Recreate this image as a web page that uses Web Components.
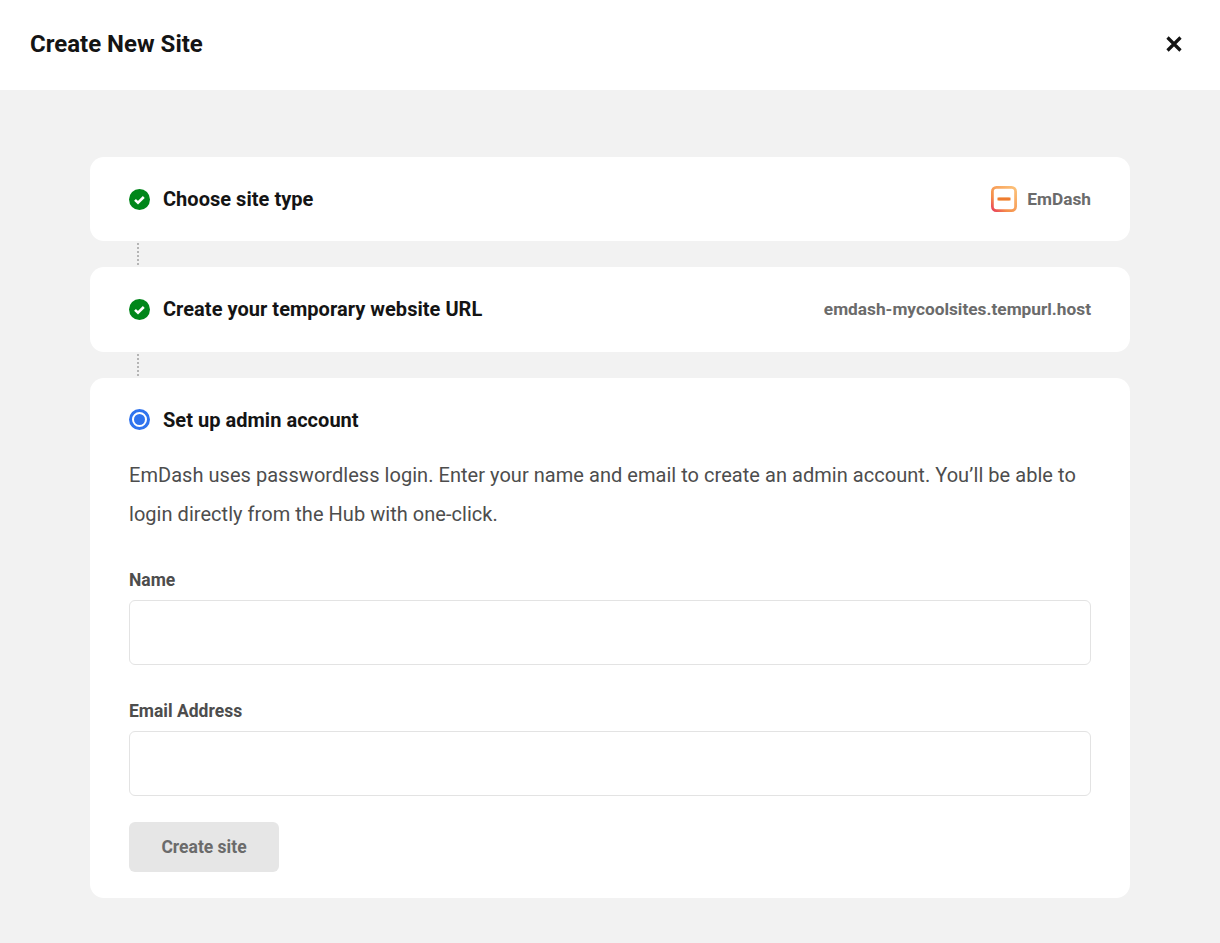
<!DOCTYPE html>
<html lang="en">
<head>
<meta charset="utf-8">
<title>Create New Site</title>
<style>
  html, body { margin: 0; background: #f2f2f2; font-family: Roboto, "Liberation Sans", sans-serif; }
</style>
</head>
<body>
<create-site-app></create-site-app>

<script>
class ModalHeader extends HTMLElement {
  constructor() {
    super();
    this.attachShadow({ mode: "open" });
  }

  connectedCallback() {
    this.shadowRoot.innerHTML = `
      <style>
        :host {
          display: flex;
          align-items: center;
          justify-content: space-between;
          height: 90px;
          padding: 0 36px 3px 30px;
          box-sizing: border-box;
          background: #fff;
        }
        h1 { margin: 0; font-size: 24px; font-weight: 700; color: #141414; }
        svg { display: block; }
      </style>
      <h1><slot></slot></h1>
      <svg width="20" height="20" viewBox="0 0 20 20" fill="none" stroke="#141414" stroke-width="3.2">
        <path d="M3.5 3.5 L16.5 16.5 M16.5 3.5 L3.5 16.5"/>
      </svg>
    `;
  }
}

class StepCard extends HTMLElement {
  constructor() {
    super();
    this.attachShadow({ mode: "open" });
  }

  connectedCallback() {
    const done = this.getAttribute("state") === "done";
    const icon = done
      ? `<svg width="21" height="21" viewBox="0 0 21 21">
           <circle cx="10.5" cy="10.5" r="10.5" fill="#00861a"/>
           <path d="M6 10.9 L9 13.7 L14.8 8" fill="none" stroke="#fff" stroke-width="2.6"/>
         </svg>`
      : `<svg width="21" height="21" viewBox="0 0 21 21">
           <circle cx="10.5" cy="10.5" r="9" fill="none" stroke="#2f73ee" stroke-width="3"/>
           <circle cx="10.5" cy="10.5" r="5.5" fill="#2f73ee"/>
         </svg>`;
    this.shadowRoot.innerHTML = `
      <style>
        :host {
          display: block;
          background: #fff;
          border-radius: 14px;
          padding: 31px 39px;
        }
        .head {
          display: flex;
          align-items: center;
          gap: 13px;
          height: 22.3px;
        }
        svg { display: block; flex: none; }
        .title {
          font-size: 20px;
          font-weight: 700;
          letter-spacing: 0.03px;
          color: #141414;
          flex: 1;
        }
      </style>
      <div class="head">
        ${icon}
        <span class="title">${this.getAttribute("title")}</span>
        <slot name="aside"></slot>
      </div>
      <slot></slot>
    `;
  }
}

class StepConnector extends HTMLElement {
  constructor() {
    super();
    this.attachShadow({ mode: "open" });
  }

  connectedCallback() {
    this.shadowRoot.innerHTML = `
      <style>
        :host {
          display: block;
          box-sizing: border-box;
          height: 26px;
          padding: 2px 0 0 47px;
        }
        div {
          width: 0;
          height: 22px;
          border-left: 2px dotted #b5b5b5;
        }
      </style>
      <div></div>
    `;
  }
}

class FormField extends HTMLElement {
  constructor() {
    super();
    this.attachShadow({ mode: "open" });
  }

  connectedCallback() {
    this.shadowRoot.innerHTML = `
      <style>
        :host { display: block; }
        label {
          display: block;
          font-size: 17.5px;
          line-height: 19px;
          font-weight: 700;
          color: #4d4d4d;
          margin-bottom: 10px;
        }
        input {
          display: block;
          width: 100%;
          height: 65px;
          box-sizing: border-box;
          border: 1px solid #e3e3e3;
          border-radius: 6px;
          background: #fff;
          font: inherit;
        }
      </style>
      <label for="f">${this.getAttribute("label")}</label>
      <input id="f" type="text">
    `;
  }
}

class CreateSiteApp extends HTMLElement {
  constructor() {
    super();
    this.attachShadow({ mode: "open" });
  }

  connectedCallback() {
    this.shadowRoot.innerHTML = `
      <style>
        :host { display: block; height: 943px; overflow: hidden; background: #f2f2f2; }
        main { padding: 67px 90px 0; }
        .aside {
          display: flex;
          align-items: center;
          gap: 10px;
          font-size: 17.28px;
          font-weight: 700;
          color: #6b6b6b;
        }
        .aside svg { display: block; }
        p {
          margin: 25px 0 0;
          font-size: 20px;
          letter-spacing: 0.04px;
          line-height: 39px;
          color: #4d4d4d;
        }
        form-field { margin-top: 37px; }
        button {
          display: block;
          width: 150px;
          height: 50px;
          margin-top: 26px;
          border: 0;
          border-radius: 6px;
          background: #e6e6e6;
          color: #6b6b6b;
          font: 700 17.5px Roboto, sans-serif;
        }
        .active { padding-bottom: 26px; }
      </style>
      <modal-header>Create New Site</modal-header>
      <main>
        <step-card state="done" title="Choose site type">
          <span slot="aside" class="aside">
            <svg width="26" height="26" viewBox="0 0 26 26">
              <defs>
                <linearGradient id="g" x1="0" y1="1" x2="1" y2="0">
                  <stop offset="0" stop-color="#e8405a"/>
                  <stop offset="0.3" stop-color="#f58f4a"/>
                  <stop offset="1" stop-color="#fcc27a"/>
                </linearGradient>
              </defs>
              <rect x="1.4" y="1.4" width="23.2" height="23.2" rx="4" fill="#fff" stroke="url(#g)" stroke-width="2.8"/>
              <rect x="6" y="11" width="14" height="4" rx="2" fill="#f6b27c"/>
              <rect x="7" y="12" width="12" height="2" fill="#ee7b30"/>
            </svg>
            EmDash
          </span>
        </step-card>
        <step-connector></step-connector>
        <step-card state="done" title="Create your temporary website URL">
          <span slot="aside" class="aside">emdash-mycoolsites.tempurl.host</span>
        </step-card>
        <step-connector></step-connector>
        <step-card state="active" title="Set up admin account" class="active">
          <p>EmDash uses passwordless login. Enter your name and email to create an admin account. You’ll be able to login directly from the Hub with one-click.</p>
          <form-field label="Name"></form-field>
          <form-field label="Email Address"></form-field>
          <button type="button">Create site</button>
        </step-card>
      </main>
    `;
  }
}

customElements.define("modal-header", ModalHeader);
customElements.define("step-card", StepCard);
customElements.define("step-connector", StepConnector);
customElements.define("form-field", FormField);
customElements.define("create-site-app", CreateSiteApp);
</script>
</body>
</html>
